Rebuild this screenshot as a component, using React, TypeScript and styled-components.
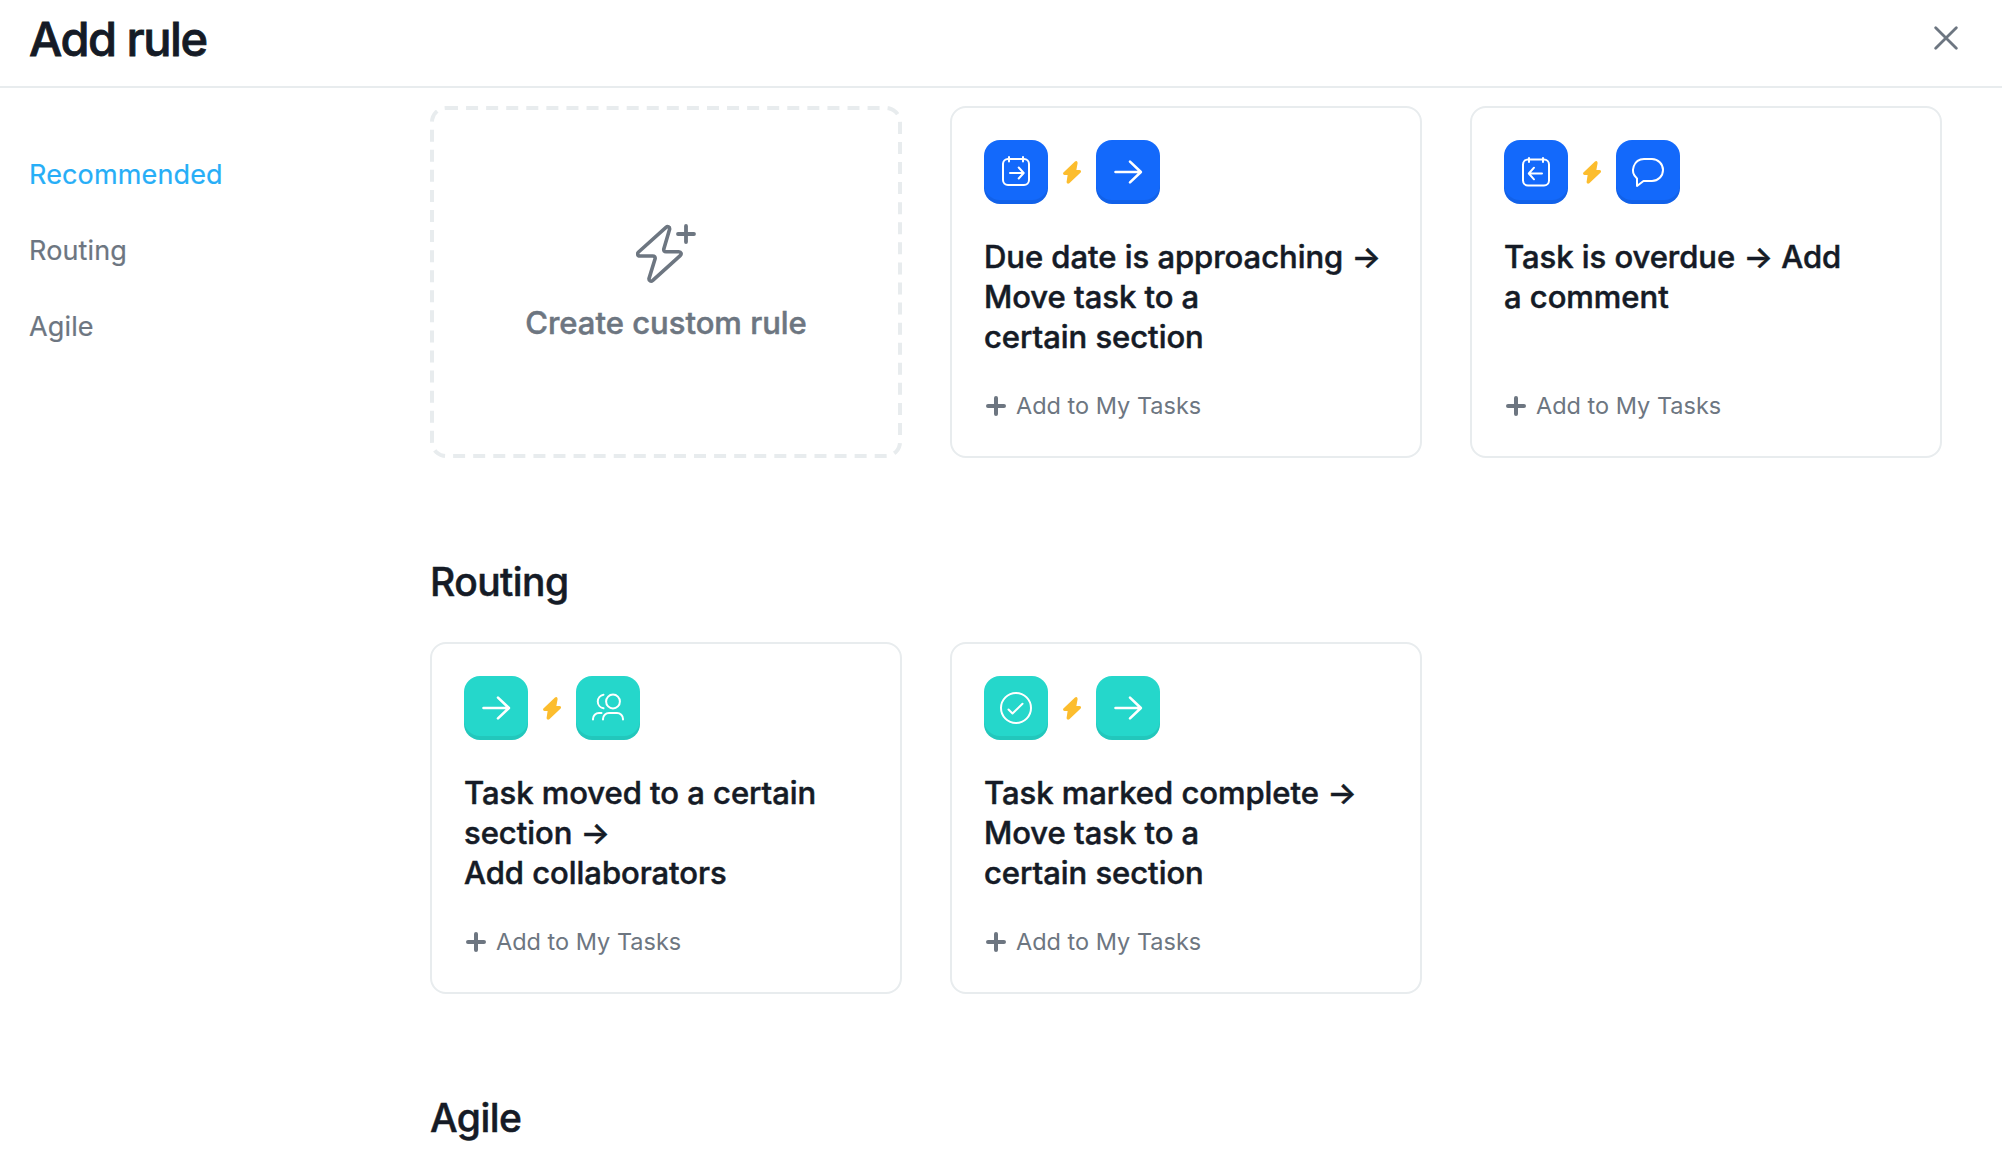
import React from "react";
import styled, { createGlobalStyle } from "styled-components";

type IconName = "dueSoon" | "overdue" | "arrow" | "comment" | "people" | "check";
type Tone = "blue" | "teal";

type Rule = {
  icons: [IconName, IconName];
  lines: string[];
};

const recommendedRules: Rule[] = [
  {
    icons: ["dueSoon", "arrow"],
    lines: ["Due date is approaching →", "Move task to a", "certain section"],
  },
  {
    icons: ["overdue", "comment"],
    lines: ["Task is overdue → Add", "a comment"],
  },
];

const routingRules: Rule[] = [
  {
    icons: ["arrow", "people"],
    lines: ["Task moved to a certain", "section →", "Add collaborators"],
  },
  {
    icons: ["check", "arrow"],
    lines: ["Task marked complete →", "Move task to a", "certain section"],
  },
];

const navItems = ["Recommended", "Routing", "Agile"];

const tileColors: Record<Tone, string> = {
  blue: "#1369fb",
  teal: "#25d7cb",
};

const iconShapes: Record<IconName, React.ReactNode> = {
  dueSoon: (
    <>
      <rect x="19" y="19" width="26" height="26" rx="5" />
      <path d="M25 17v4.5M39 17v4.5" />
      <path d="M26 33h13.5M34.7 27.5l5 5.5-5 5.5" />
    </>
  ),
  overdue: (
    <>
      <rect x="19" y="19.5" width="26" height="26" rx="5" />
      <path d="M25 18v4M39 18v4" />
      <path d="M38 33.5H24.9M30 27.7l-5.2 5.8 5.2 5.8" />
    </>
  ),
  arrow: <path strokeWidth="2.6" d="M19.5 32h25.2M34 21.6L44.9 32 34 42.4" />,
  comment: (
    <path d="M28 19h8a11 11 0 0 1 0 22h-8.5L21 46v-7.6A11 11 0 0 1 28 19z" />
  ),
  people: (
    <>
      <circle cx="37" cy="25.5" r="6.9" />
      <path d="M27.5 18.7a6.9 6.9 0 0 0 0 13.6" />
      <path d="M27 43.5V43a6 6 0 0 1 6-6h8a6 6 0 0 1 6 6v.5" />
      <path d="M17 43.5V43a6 6 0 0 1 6-6h2.5" />
    </>
  ),
  check: (
    <>
      <circle cx="32" cy="32" r="15" />
      <path d="M24.5 33.5l4 4 10-9.7" />
    </>
  ),
};

const RuleCard: React.FC<{ rule: Rule; tone: Tone }> = ({ rule, tone }) => {
  const [from, to] = rule.icons;
  return (
    <Card>
      <IconRow>
        <Tile $tone={tone} viewBox="0 0 64 64">
          {iconShapes[from]}
        </Tile>
        <Bolt viewBox="0 0 18 23">
          <path d="M12.6 1.2L1.3 11.8c-.6.6-.3 1.2.4 1.2h4L4.5 21c0 .8.6 1 1.2.5L16.8 11c.6-.6.3-1.1-.4-1.1h-4.1L13.700 2c0-.9-.5-1.300-1.100-.8z" />
        </Bolt>
        <Tile $tone={tone} viewBox="0 0 64 64">
          {iconShapes[to]}
        </Tile>
      </IconRow>
      <CardTitle>
        {rule.lines.map((line) => (
          <span key={line}>{line}</span>
        ))}
      </CardTitle>
      <AddButton type="button">
        <svg width="20" height="20" viewBox="0 0 20 20">
          <path d="M10 2v16M2 10h16" />
        </svg>
        Add to My Tasks
      </AddButton>
    </Card>
  );
};

const App: React.FC = () => {
  return (
    <>
      <GlobalStyle />
      <Dialog>
        <Header>
          <Title>Add rule</Title>
          <CloseButton type="button" aria-label="Close">
            <svg width="24" height="24" viewBox="0 0 24 24">
              <path d="M1.7 1.7l20.6 20.6M22.3 1.7L1.7 22.3" />
            </svg>
          </CloseButton>
        </Header>
        <Body>
          <Nav>
            {navItems.map((item, i) => (
              <NavItem key={item} $active={i === 0}>
                {item}
              </NavItem>
            ))}
          </Nav>
          <Content>
            <CardGrid>
              <CustomCard>
                <svg width="60" height="60" viewBox="0 0 60 60">
                  <path d="M30 3.4L2.6 28c-1.7 1.6-1 4 1.3 4h12.8c1.8 0 2.7 1 2.4 2.7L13 54.6c-.2 2.4 2 3.3 3.8 1.8L44.2 31.6c1.7-1.6.9-3.8-1.3-3.8H30c-1.6 0-2.5-1-2.2-2.7L33.6 5.2c.3-2.3-1.9-3.3-3.6-1.8z" />
                  <path strokeWidth="3.8" d="M50 2v16M42 10h16" />
                </svg>
                Create custom rule
              </CustomCard>
              {recommendedRules.map((rule) => (
                <RuleCard key={rule.lines[0]} rule={rule} tone="blue" />
              ))}
            </CardGrid>
            <SectionTitle>Routing</SectionTitle>
            <CardGrid>
              {routingRules.map((rule) => (
                <RuleCard key={rule.lines[0]} rule={rule} tone="teal" />
              ))}
            </CardGrid>
            <SectionTitle>Agile</SectionTitle>
          </Content>
        </Body>
      </Dialog>
    </>
  );
};

export default App;

const GlobalStyle = createGlobalStyle`
  *,
  *::before {
    box-sizing: border-box;
  }
  body {
    margin: 0;
    background: #fff;
    color: #151b26;
    font-family: Inter, "Liberation Sans", sans-serif;
  }
  button {
    border: 0;
    padding: 0;
    background: none;
    font-family: inherit;
    cursor: pointer;
  }
  svg {
    display: block;
    flex: none;
    fill: none;
    stroke-linecap: round;
    stroke-linejoin: round;
  }
`;

const Dialog = styled.div`
  display: flex;
  flex-direction: column;
  height: 1160px;
  overflow: hidden;
`;

const Header = styled.header`
  display: flex;
  align-items: flex-start;
  justify-content: space-between;
  flex: none;
  height: 88px;
  padding: 10px 44px 0 29px;
  border-bottom: 2px solid #e8ecee;
`;

const Title = styled.h1`
  margin: 0;
  font-size: 47px;
  font-weight: 500;
  line-height: 58px;
  letter-spacing: -1.5px;
  -webkit-text-stroke: 0.8px currentColor;
`;

const CloseButton = styled.button`
  margin-top: 16px;
  stroke: #6d7681;
  stroke-width: 2.8;
`;

const Body = styled.div`
  display: flex;
`;

const Nav = styled.nav`
  display: flex;
  flex-direction: column;
  gap: 40px;
  width: 430px;
  padding: 69px 0 0 29px;
`;

const NavItem = styled.a<{ $active: boolean }>`
  color: ${({ $active }) => ($active ? "#27aef7" : "#6d7681")};
  font-size: 27px;
  line-height: 36px;
  letter-spacing: 0.15px;
  -webkit-text-stroke: 0.2px currentColor;
`;

const Content = styled.main`
  flex: none;
  padding-top: 18px;
`;

const CardGrid = styled.div`
  display: grid;
  grid-template-columns: repeat(3, 472px);
  gap: 48px;
`;

const SectionTitle = styled.h2`
  margin: 100px 0 36px;
  font-size: 39px;
  font-weight: 500;
  line-height: 48px;
  letter-spacing: -0.55px;
  -webkit-text-stroke: 0.5px currentColor;
`;

const Card = styled.section`
  display: flex;
  flex-direction: column;
  height: 352px;
  padding: 32px;
  border: 2px solid #e8ecee;
  border-radius: 16px;
`;

const CustomCard = styled.button`
  position: relative;
  display: flex;
  flex-direction: column;
  align-items: center;
  height: 352px;
  padding-top: 118px;
  color: #6d7681;
  font-size: 31px;
  font-weight: 500;
  line-height: 40px;
  -webkit-text-stroke: 0.5px currentColor;

  svg {
    margin-bottom: 19px;
    stroke: #6d7681;
    stroke-width: 3.6;
  }

  /* drawn at half size and scaled up for the longer dashes */
  &::before {
    content: "";
    position: absolute;
    top: 0;
    left: 0;
    width: 50%;
    height: 50%;
    border: 2px dashed #e8ecee;
    border-radius: 8px;
    transform: scale(2);
    transform-origin: 0 0;
  }
`;

const IconRow = styled.div`
  display: flex;
  align-items: center;
`;

const Tile = styled.svg<{ $tone: Tone }>`
  width: 64px;
  height: 64px;
  border-radius: 16px;
  background: ${({ $tone }) => tileColors[$tone]};
  box-shadow: inset 0 -4px 0 rgba(0, 0, 0, 0.07);
  stroke: #fff;
  stroke-width: 2;
`;

const Bolt = styled.svg`
  width: 18px;
  height: 23px;
  margin: 0 15px;
  fill: #fcbd2e;
  stroke: #fcbd2e;
  stroke-width: 1.8;
`;

const CardTitle = styled.h3`
  display: flex;
  flex-direction: column;
  height: 120px;
  margin: 33px 0 31px;
  font-size: 31px;
  font-weight: 500;
  line-height: 40px;
  letter-spacing: -0.03px;
  white-space: nowrap;
  -webkit-text-stroke: 0.5px currentColor;
`;

const AddButton = styled.button`
  display: flex;
  align-items: center;
  gap: 10px;
  padding-left: 2px;
  color: #6d7681;
  font-size: 23.5px;
  line-height: 36px;

  svg {
    stroke: #6d7681;
    stroke-width: 4;
  }
`;
